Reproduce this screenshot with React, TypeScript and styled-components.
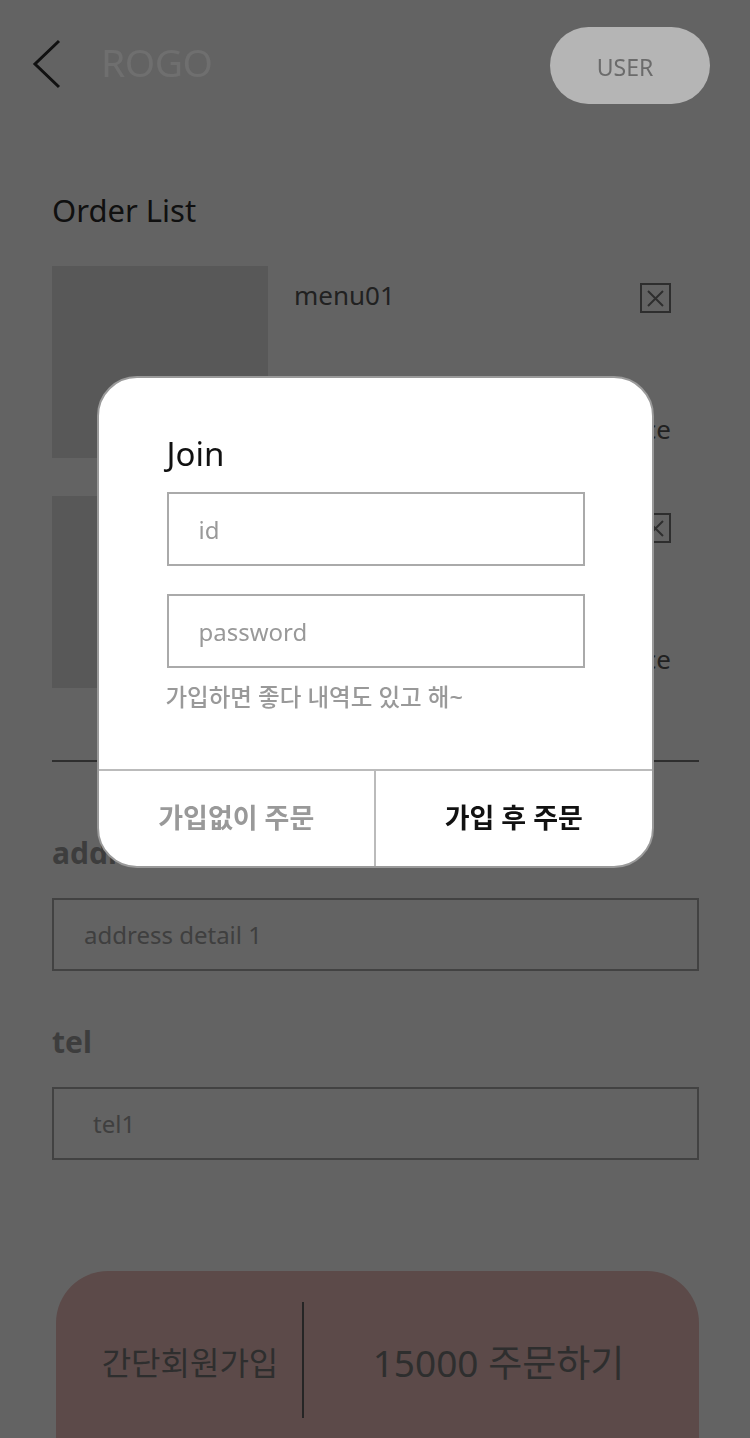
import React from 'react';
import styled, { createGlobalStyle } from 'styled-components';

const GlobalStyle = createGlobalStyle`
    body {
        margin: 0;
        background: #ffffff;
        font-family: 'Noto Sans', 'Noto Sans CJK KR', sans-serif;
    }
`;

const orders = [
    { id: 1, name: 'menu01', price: 'price' },
    { id: 2, name: 'menu02', price: 'price' },
];

function App() {
    return (
        <Page>
            <GlobalStyle />
            <Header>
                <BackButton aria-label="back">
                    <svg width="30" height="50" viewBox="0 0 30 50">
                        <polyline points="27,2 3,25 27,48" fill="none" stroke="#111" strokeWidth="3" />
                    </svg>
                </BackButton>
                <Logo>ROGO</Logo>
                <UserButton>USER</UserButton>
            </Header>

            <Title>Order List</Title>
            <OrderListWrap>
                {orders.map(o => (
                    <OrderItem key={o.id}>
                        <Thumb />
                        <ItemInfo>
                            <ItemTop>
                                <ItemName>{o.name}</ItemName>
                                <RemoveButton aria-label="remove">
                                    <svg width="17" height="17" viewBox="0 0 17 17">
                                        <path d="M1 1 L16 16 M16 1 L1 16" stroke="#777" strokeWidth="2" />
                                    </svg>
                                </RemoveButton>
                            </ItemTop>
                            <ItemPrice>{o.price}</ItemPrice>
                        </ItemInfo>
                    </OrderItem>
                ))}
            </OrderListWrap>

            <Divider />

            <Label top={71}>address</Label>
            <Field indent={30}>address detail 1</Field>
            <Label top={51}>tel</Label>
            <Field indent={39}>tel1</Field>

            <OrderBar>
                <SignupPart>간단회원가입</SignupPart>
                <BarDivider />
                <OrderPart>15000 주문하기</OrderPart>
            </OrderBar>

            <Overlay>
                <Modal>
                    <ModalBody>
                        <ModalTitle>Join</ModalTitle>
                        <ModalInput placeholder="id" />
                        <ModalInput placeholder="password" type="password" />
                        <Hint>가입하면 좋다 내역도 있고 해~</Hint>
                    </ModalBody>
                    <ModalFooter>
                        <FooterButton>가입없이 주문</FooterButton>
                        <FooterButton primary>가입 후 주문</FooterButton>
                    </ModalFooter>
                </Modal>
            </Overlay>
        </Page>
    );
}

const Page = styled.div`
    width: 750px;
    padding: 27px 51px 0 52px;
    box-sizing: border-box;
`;

const Header = styled.div`
    position: relative;
    z-index: 20;
    height: 77px;
    margin-left: -20px;
    margin-right: -11px;

    display: flex;
    align-items: center;
`;

const BackButton = styled.button`
    border: none;
    background: none;
    padding: 0;
    width: 32px;
    height: 50px;
    margin-top: -4px;
    display: flex;
    align-items: center;
`;

const Logo = styled.div`
    margin-left: 37px;
    margin-top: -8px;
    font-size: 39px;
    color: #6f6f6f;
    letter-spacing: -0.5px;
`;

const UserButton = styled.button`
    margin-left: auto;
    width: 160px;
    height: 77px;
    border: none;
    border-radius: 39px;
    background: #b5b5b5;
    color: #6b6b6b;
    font-family: inherit;
    font-size: 23px;
    padding: 3px 10px 0 0;
`;

const Title = styled.div`
    margin-top: 86px;
    font-size: 31px;
    line-height: 40px;
    color: #2b2b2b;
`;

const OrderListWrap = styled.div`
    margin-top: 36px;
    display: flex;
    flex-direction: column;
    gap: 38px;
`;

const OrderItem = styled.div`
    display: flex;
    height: 192px;
`;

const Thumb = styled.div`
    width: 216px;
    height: 192px;
    background: #e2e2e2;
`;

const ItemInfo = styled.div`
    flex: 1;
    padding: 12px 28px 12px 26px;
    display: flex;
    flex-direction: column;
    justify-content: space-between;
`;

const ItemTop = styled.div`
    display: flex;
    justify-content: space-between;
    align-items: flex-start;
`;

const ItemName = styled.div`
    font-size: 26px;
    line-height: 34px;
    color: #575757;
`;

const RemoveButton = styled.button`
    margin-top: 5px;
    width: 31px;
    height: 30px;
    padding: 0;
    border: 2px solid #777;
    background: none;
    display: flex;
    align-items: center;
    justify-content: center;
`;

const ItemPrice = styled.div`
    text-align: right;
    font-size: 26px;
    line-height: 34px;
    color: #575757;
`;

const Divider = styled.div`
    margin-top: 72px;
    height: 2px;
    background: #777;
`;

const Label = styled.div<{ top: number }>`
    margin-top: ${p => p.top}px;
    font-size: 30px;
    font-weight: bold;
    line-height: 40px;
    color: #9d9d9d;
`;

const Field = styled.div<{ indent: number }>`
    margin-top: 25px;
    height: 73px;
    box-sizing: border-box;
    border: 2px solid #aaa;
    padding-left: ${p => p.indent}px;
    display: flex;
    align-items: center;
    font-size: 24px;
    color: #a3a3a3;
`;

const OrderBar = styled.div`
    margin-top: 111px;
    margin-left: 4px;
    height: 180px;
    border-radius: 52px 52px 0 0;
    background: #ecbfbc;
    display: flex;
    align-items: center;
`;

const SignupPart = styled.div`
    width: 246px;
    padding-left: 22px;
    box-sizing: border-box;
    text-align: center;
    font-size: 32px;
    color: #777;
`;

const BarDivider = styled.div`
    width: 2px;
    height: 116px;
    margin-top: -2px;
    background: #5f5f5f;
`;

const OrderPart = styled.div`
    flex: 1;
    text-align: center;
    font-size: 37px;
    color: #777;
    padding-right: 6px;
`;

const Overlay = styled.div`
    position: fixed;
    inset: 0;
    z-index: 10;
    background: rgba(0, 0, 0, 0.61);
    display: flex;
    justify-content: center;
    align-items: flex-start;
    padding-top: 376px;
`;

const Modal = styled.div`
    width: 557px;
    height: 492px;
    box-sizing: border-box;
    border: 2px solid #9a9a9a;
    border-radius: 40px;
    background: #fff;
    overflow: hidden;
    display: flex;
    flex-direction: column;
`;

const ModalBody = styled.div`
    flex: 1;
    padding: 54px 67px 0 68px;
    display: flex;
    flex-direction: column;
`;

const ModalTitle = styled.div`
    font-size: 33px;
    line-height: 44px;
    color: #111;
    margin-bottom: 16px;
`;

const ModalInput = styled.input`
    height: 74px;
    box-sizing: border-box;
    border: 2px solid #aaa;
    padding: 0 30px;
    font-family: inherit;
    font-size: 24px;
    color: #333;
    outline: none;
    margin-bottom: 28px;

    &::placeholder {
        color: #999;
    }
`;

const Hint = styled.div`
    margin-top: -14px;
    font-size: 23.5px;
    line-height: 30px;
    font-weight: 500;
    color: #999;
    margin-left: -1px;
`;

const ModalFooter = styled.div`
    height: 95px;
    border-top: 2px solid #bbb;
    display: flex;
`;

const FooterButton = styled.button<{ primary?: boolean }>`
    flex: 1;
    border: none;
    background: none;
    font-family: inherit;
    font-size: 27px;
    font-weight: bold;
    color: ${p => (p.primary ? '#111' : '#999')};
    padding: 0 0 4px;

    & + & {
        border-left: 2px solid #bbb;
    }
`;

export default App;
